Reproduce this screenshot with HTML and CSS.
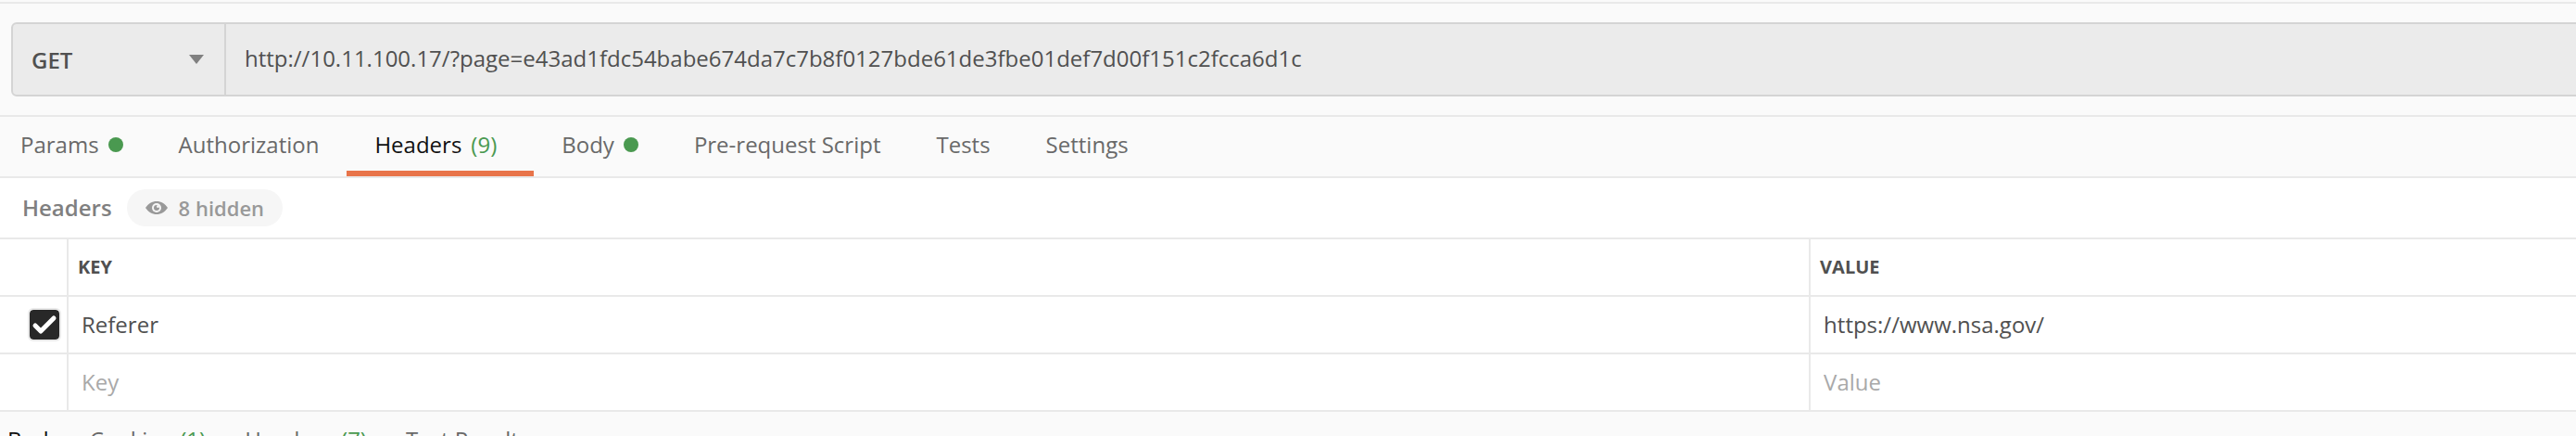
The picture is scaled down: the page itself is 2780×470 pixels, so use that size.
FILE: index.html
```html
<!DOCTYPE html>
<html lang="en">
<head>
<meta charset="utf-8">
<title>Request</title>
<link rel="stylesheet" href="styles.css">
</head>
<body>
<main class="request">
  <form class="url-bar">
    <div class="method">
      <select class="method-select" aria-label="HTTP method">
        <option>GET</option>
        <option>POST</option>
        <option>PUT</option>
        <option>DELETE</option>
      </select>
      <svg class="method-arrow" viewBox="0 0 16 10" aria-hidden="true"><path d="M0 0h16L8 10z"/></svg>
    </div>
    <input class="url-input" type="text" aria-label="Request URL" value="http://10.11.100.17/?page=e43ad1fdc54babe674da7c7b8f0127bde61de3fbe01def7d00f151c2fcca6d1c">
  </form>

  <nav class="tabs" aria-label="Request sections">
    <button class="tab" type="button">Params <span class="dot"></span></button>
    <button class="tab" type="button">Authorization</button>
    <button class="tab tab-active" type="button">Headers <span class="count">(9)</span></button>
    <button class="tab" type="button">Body <span class="dot"></span></button>
    <button class="tab" type="button">Pre-request Script</button>
    <button class="tab" type="button">Tests</button>
    <button class="tab" type="button">Settings</button>
  </nav>

  <section class="headers">
    <div class="headers-bar">
      <h2 class="headers-title">Headers</h2>
      <button class="hidden-toggle" type="button">
        <svg class="eye" viewBox="0 0 24 14" aria-hidden="true">
          <path class="eye-shape" d="M0 7C3 2.500 7.200 0 12 0s9 2.500 12 7c-3 4.500-7.200 7-12 7S3 11.500 0 7z"/>
          <circle class="eye-white" cx="12" cy="7" r="5"/>
          <circle class="eye-shape" cx="12" cy="7" r="3"/>
          <circle class="eye-white" cx="13.500" cy="5.500" r="1.500"/>
        </svg>
        8 hidden
      </button>
    </div>
    <table class="grid">
      <colgroup><col class="col-check"><col class="col-key"><col></colgroup>
      <thead>
        <tr><th></th><th scope="col">KEY</th><th scope="col">VALUE</th></tr>
      </thead>
      <tbody>
        <tr>
          <td class="check-cell">
            <label class="check">
              <input class="check-input" type="checkbox" aria-label="Enable Referer" checked>
              <svg class="check-mark" viewBox="0 0 32 32" aria-hidden="true"><path d="M6 17l6 6L26 9"/></svg>
            </label>
          </td>
          <td><input class="cell-input" type="text" aria-label="Key" value="Referer"></td>
          <td><input class="cell-input" type="text" aria-label="Value" value="https://www.nsa.gov/"></td>
        </tr>
        <tr>
          <td></td>
          <td><input class="cell-input" type="text" aria-label="New key" placeholder="Key"></td>
          <td><input class="cell-input" type="text" aria-label="New value" placeholder="Value"></td>
        </tr>
      </tbody>
    </table>
  </section>

  <nav class="response-tabs" aria-label="Response sections">
    <button class="response-tab response-tab-active" type="button">Body</button>
    <button class="response-tab" type="button">Cookies <span class="count">(1)</span></button>
    <button class="response-tab" type="button">Headers <span class="count">(7)</span></button>
    <button class="response-tab" type="button">Test Results</button>
  </nav>
</main>
</body>
</html>
```
FILE: styles.css
```css
* {
  box-sizing: border-box;
}

body {
  margin: 0;
  background: #fafafa;
  color: #505050;
  font: 24px/32px "Open Sans", "Noto Sans", sans-serif;
}

button,
input,
select {
  margin: 0;
  padding: 0;
  border: 0;
  background: none;
  color: inherit;
  font: inherit;
}

.request {
  height: 100vh;
  padding-top: 2px;
  overflow: hidden;
}

/* URL bar */
.url-bar {
  display: flex;
  padding: 20px 0 20px 12px;
  border-top: 2px solid #e9e9e9;
  border-bottom: 2px solid #e9e9e9;
}

.method {
  display: grid;
  align-items: center;
  flex: 0 0 232px;
  height: 80px;
  border: 2px solid #d4d4d4;
  border-radius: 6px 0 0 6px;
  background: #ebebeb;
}

.method-select {
  grid-area: 1 / 1;
  height: 76px;
  padding: 2px 20px 0;
  appearance: none;
  font-weight: 600;
}

.method-arrow {
  grid-area: 1 / 1;
  justify-self: end;
  width: 16px;
  height: 10px;
  margin-right: 22px;
  fill: #808080;
  pointer-events: none;
}

.url-input {
  flex: 1;
  min-width: 0;
  height: 80px;
  padding: 0 20px 4px;
  border: solid #d4d4d4;
  border-width: 2px 0;
  background: #ebebeb;
}

/* Request tabs */
.tabs {
  display: flex;
  height: 66px;
  padding-left: 22px;
  border-bottom: 2px solid #e9e9e9;
}

.tab {
  display: flex;
  align-items: center;
  gap: 10px;
  padding: 2px 30px 0;
  border-bottom: 6px solid transparent;
  color: #696969;
  white-space: nowrap;
}

.tab:first-child {
  padding-left: 0;
}

.tab-active {
  border-color: #e8744a;
  color: #111;
}

.dot {
  width: 16px;
  height: 16px;
  border-radius: 50%;
  background: #4a9950;
}

.count {
  margin-right: 10px;
  color: #4a9950;
}

/* Headers editor */
.headers {
  background: #fff;
}

.headers-bar {
  display: flex;
  align-items: center;
  gap: 16px;
  height: 66px;
  padding-left: 24px;
  border-bottom: 2px solid #e9e9e9;
}

.headers-title {
  margin: 0;
  color: #808080;
  font-size: 24px;
  font-weight: 600;
}

.hidden-toggle {
  display: flex;
  align-items: center;
  gap: 12px;
  height: 40px;
  padding: 0 20px;
  border-radius: 20px;
  background: #f6f6f6;
  color: #999;
  font-size: 22px;
  font-weight: 600;
}

.eye {
  width: 24px;
  height: 14px;
}

.eye-shape {
  fill: #999;
}

.eye-white {
  fill: #f6f6f6;
}

.grid {
  width: 100%;
  border-spacing: 0;
  table-layout: fixed;
}

.col-check {
  width: 74px;
}

.col-key {
  width: 67.63%;
}

.grid th,
.grid td {
  height: 62px;
  padding: 0;
  border-right: 2px solid #e9e9e9;
  border-bottom: 2px solid #e9e9e9;
}

.grid th:last-child,
.grid td:last-child {
  border-right: 0;
}

.grid th {
  padding-left: 10px;
  font-size: 20px;
  font-weight: 700;
  text-align: left;
}

.cell-input {
  display: block;
  width: 100%;
  height: 60px;
  padding: 0 14px 2px;
}

.cell-input::placeholder {
  color: #a9a9a9;
  opacity: 1;
}

.check {
  display: grid;
  justify-content: end;
  padding-right: 6px;
}

.check-input {
  grid-area: 1 / 1;
  width: 36px;
  height: 36px;
  border: 2px solid #e9e9e9;
  border-radius: 6px;
  appearance: none;
}

.check-input:checked {
  background: #282828;
  background-clip: padding-box;
}

.check-mark {
  grid-area: 1 / 1;
  place-self: center;
  width: 32px;
  height: 32px;
  fill: none;
  stroke: #fff;
  stroke-width: 5;
  stroke-linecap: round;
  stroke-linejoin: round;
  pointer-events: none;
}

.check-input:not(:checked) + .check-mark {
  visibility: hidden;
}

/* Response tabs */
.response-tabs {
  display: flex;
  gap: 32px;
  padding: 14px 8px;
}

.response-tab {
  display: flex;
  gap: 10px;
  color: #696969;
  white-space: nowrap;
}

.response-tab-active {
  color: #111;
}
```
